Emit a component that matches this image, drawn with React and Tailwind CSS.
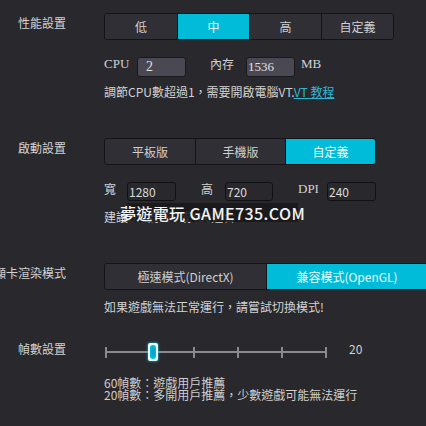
import React from 'react'

const font = { fontFamily: '"Noto Sans CJK TC", "Liberation Sans", sans-serif' }

function Label({ children }) {
  return (
    <div className="w-[66px] shrink-0 flex justify-end">
      <span className="shrink-0 whitespace-nowrap text-[12px] leading-[20px] text-[#d2d2d2]">
        {children}
      </span>
    </div>
  )
}

function Segments({ items, active, width, className }) {
  return (
    <div
      className={`flex h-[27px] shrink-0 rounded-[3px] border border-[#141417] overflow-hidden ${className}`}
    >
      {items.map((it, i) => (
        <div
          key={it}
          style={{ width }}
          className={`flex items-center justify-center text-[12px] ${
            i > 0 ? 'border-l border-[#141417]' : ''
          } ${
            i === active
              ? 'bg-[#00bcd9] text-[#e8fbff]'
              : 'bg-[#302f35] text-[#cfcfcf]'
          }`}
        >
          {it}
        </div>
      ))}
    </div>
  )
}

function Slider() {
  const ticks = [0, 44, 88, 132, 176, 220]
  return (
    <div className="relative w-[224px] h-[20px]">
      <svg width="224" height="20" className="absolute left-0 top-0">
        <line x1="1" y1="9" x2="221" y2="9" stroke="#8a8a8c" strokeWidth="2" />
        {ticks.map((t) => (
          <line
            key={t}
            x1={t + 1}
            y1="4"
            x2={t + 1}
            y2="15"
            stroke="#8a8a8c"
            strokeWidth="2"
          />
        ))}
      </svg>
      <div className="absolute left-[43px] top-0 w-[10px] h-[18px] rounded-[2px] bg-[#e9fbff] shadow-[0_0_3px_#00c8e8] flex items-center justify-center">
        <div className="w-[6px] h-[14px] rounded-[3px] bg-[#00b8d8] flex items-center justify-center">
          <div className="w-[3px] h-[8px] rounded-full bg-[#0aa6c6]" />
        </div>
      </div>
    </div>
  )
}

export default function App() {
  const serif = { fontFamily: '"Liberation Serif", "Noto Sans CJK TC", serif' }
  return (
    <div
      style={font}
      className="relative w-[426px] h-[426px] overflow-hidden bg-[#29282d] text-[#d2d2d2]"
    >
      {/* 性能設置 */}
      <div className="flex pt-[13px]">
        <Label>性能設置</Label>
        <div className="ml-[38px] flex flex-col">
          <Segments items={['低', '中', '高', '自定義']} active={1} width={72} />
          <div className="mt-[17px] flex items-start h-[20px] text-[12px]">
            <span style={serif} className="w-[33px] leading-[12px] pt-px text-[13px] font-light">
              CPU
            </span>
            <div
              style={serif}
              className="w-[49px] h-[20px] rounded-[3px] border border-[#1a1a1e] bg-[#4a4953] pl-[8px] text-[14px] leading-[18px] text-[#e0e0e0]"
            >
              2
            </div>
            <span className="ml-[24px] w-[36px] leading-[12px] pt-px">內存</span>
            <div
              style={serif}
              className="w-[49px] h-[20px] rounded-[3px] border border-[#1a1a1e] bg-[#4a4953] pl-[1px] text-[13px] leading-[18px] text-[#e0e0e0]"
            >
              1536
            </div>
            <span style={serif} className="ml-[6px] leading-[12px] pt-px text-[13px]">
              MB
            </span>
          </div>
          <div className="mt-[7px] text-[12px] leading-[16px] whitespace-nowrap">
            調節CPU數超過1，需要開啟電腦VT.
            <span className="text-[#2fb8d8] underline">VT 教程</span>
          </div>
        </div>
      </div>

      {/* 啟動設置 */}
      <div className="flex mt-[38px]">
        <Label>啟動設置</Label>
        <div className="ml-[38px] flex flex-col">
          <Segments
            items={['平板版', '手機版', '自定義']}
            active={2}
            width={90}
          />
          <div className="mt-[17px] flex items-start h-[19px] text-[12px]">
            <span className="w-[23px] leading-[12px] pt-px">寬</span>
            <div className="w-[49px] h-[19px] rounded-[3px] border border-[#111114] pl-[1px] text-[12px] leading-[17px] text-[#dcdcdc]">
              1280
            </div>
            <span className="ml-[25px] w-[24px] leading-[12px] pt-px">高</span>
            <div className="w-[48px] h-[19px] rounded-[3px] border border-[#111114] pl-[1px] text-[12px] leading-[17px] text-[#dcdcdc]">
              720
            </div>
            <span style={serif} className="ml-[25px] w-[29px] leading-[12px] pt-px text-[13px]">
              DPI
            </span>
            <div className="w-[49px] h-[19px] rounded-[3px] border border-[#111114] pl-[1px] text-[12px] leading-[17px] text-[#dcdcdc]">
              240
            </div>
          </div>
          <div className="mt-[8px] text-[12px] leading-[16px] whitespace-nowrap">
            建議DPI為160或480適合
          </div>
        </div>
      </div>

      {/* 顯卡渲染模式 */}
      <div className="flex mt-[38px]">
        <Label>顯卡渲染模式</Label>
        <div className="ml-[38px] flex flex-col">
          <Segments
            items={['極速模式(DirectX)', '兼容模式(OpenGL)']}
            active={1}
            width={161}
          />
          <div className="mt-[9px] text-[12px] leading-[16px] whitespace-nowrap">
            如果遊戲無法正常運行，請嘗試切換模式!
          </div>
        </div>
      </div>

      {/* 幀數設置 */}
      <div className="flex mt-[24px]">
        <Label>幀數設置</Label>
        <div className="ml-[38px] flex flex-col">
          <div className="flex items-start">
            <div className="mt-[4px] ml-px">
              <Slider />
            </div>
            <span className="ml-[20px] text-[12px] leading-[20px]">20</span>
          </div>
          <div className="mt-[14px] text-[12px] leading-[12px] whitespace-nowrap text-[#cfcfcf]">
            <div>60幀數：遊戲用戶推薦</div>
            <div>20幀數：多開用戶推薦，少數遊戲可能無法運行</div>
          </div>
        </div>
      </div>

      {/* watermark */}
      <div className="absolute left-[127px] top-[203px] w-[171px] h-[19px] bg-[#18181a]/85 flex items-center justify-center text-[16px] font-medium text-[#f4f4f4] whitespace-nowrap tracking-[0.4px]">
        夢遊電玩 GAME735.COM
      </div>
    </div>
  )
}
